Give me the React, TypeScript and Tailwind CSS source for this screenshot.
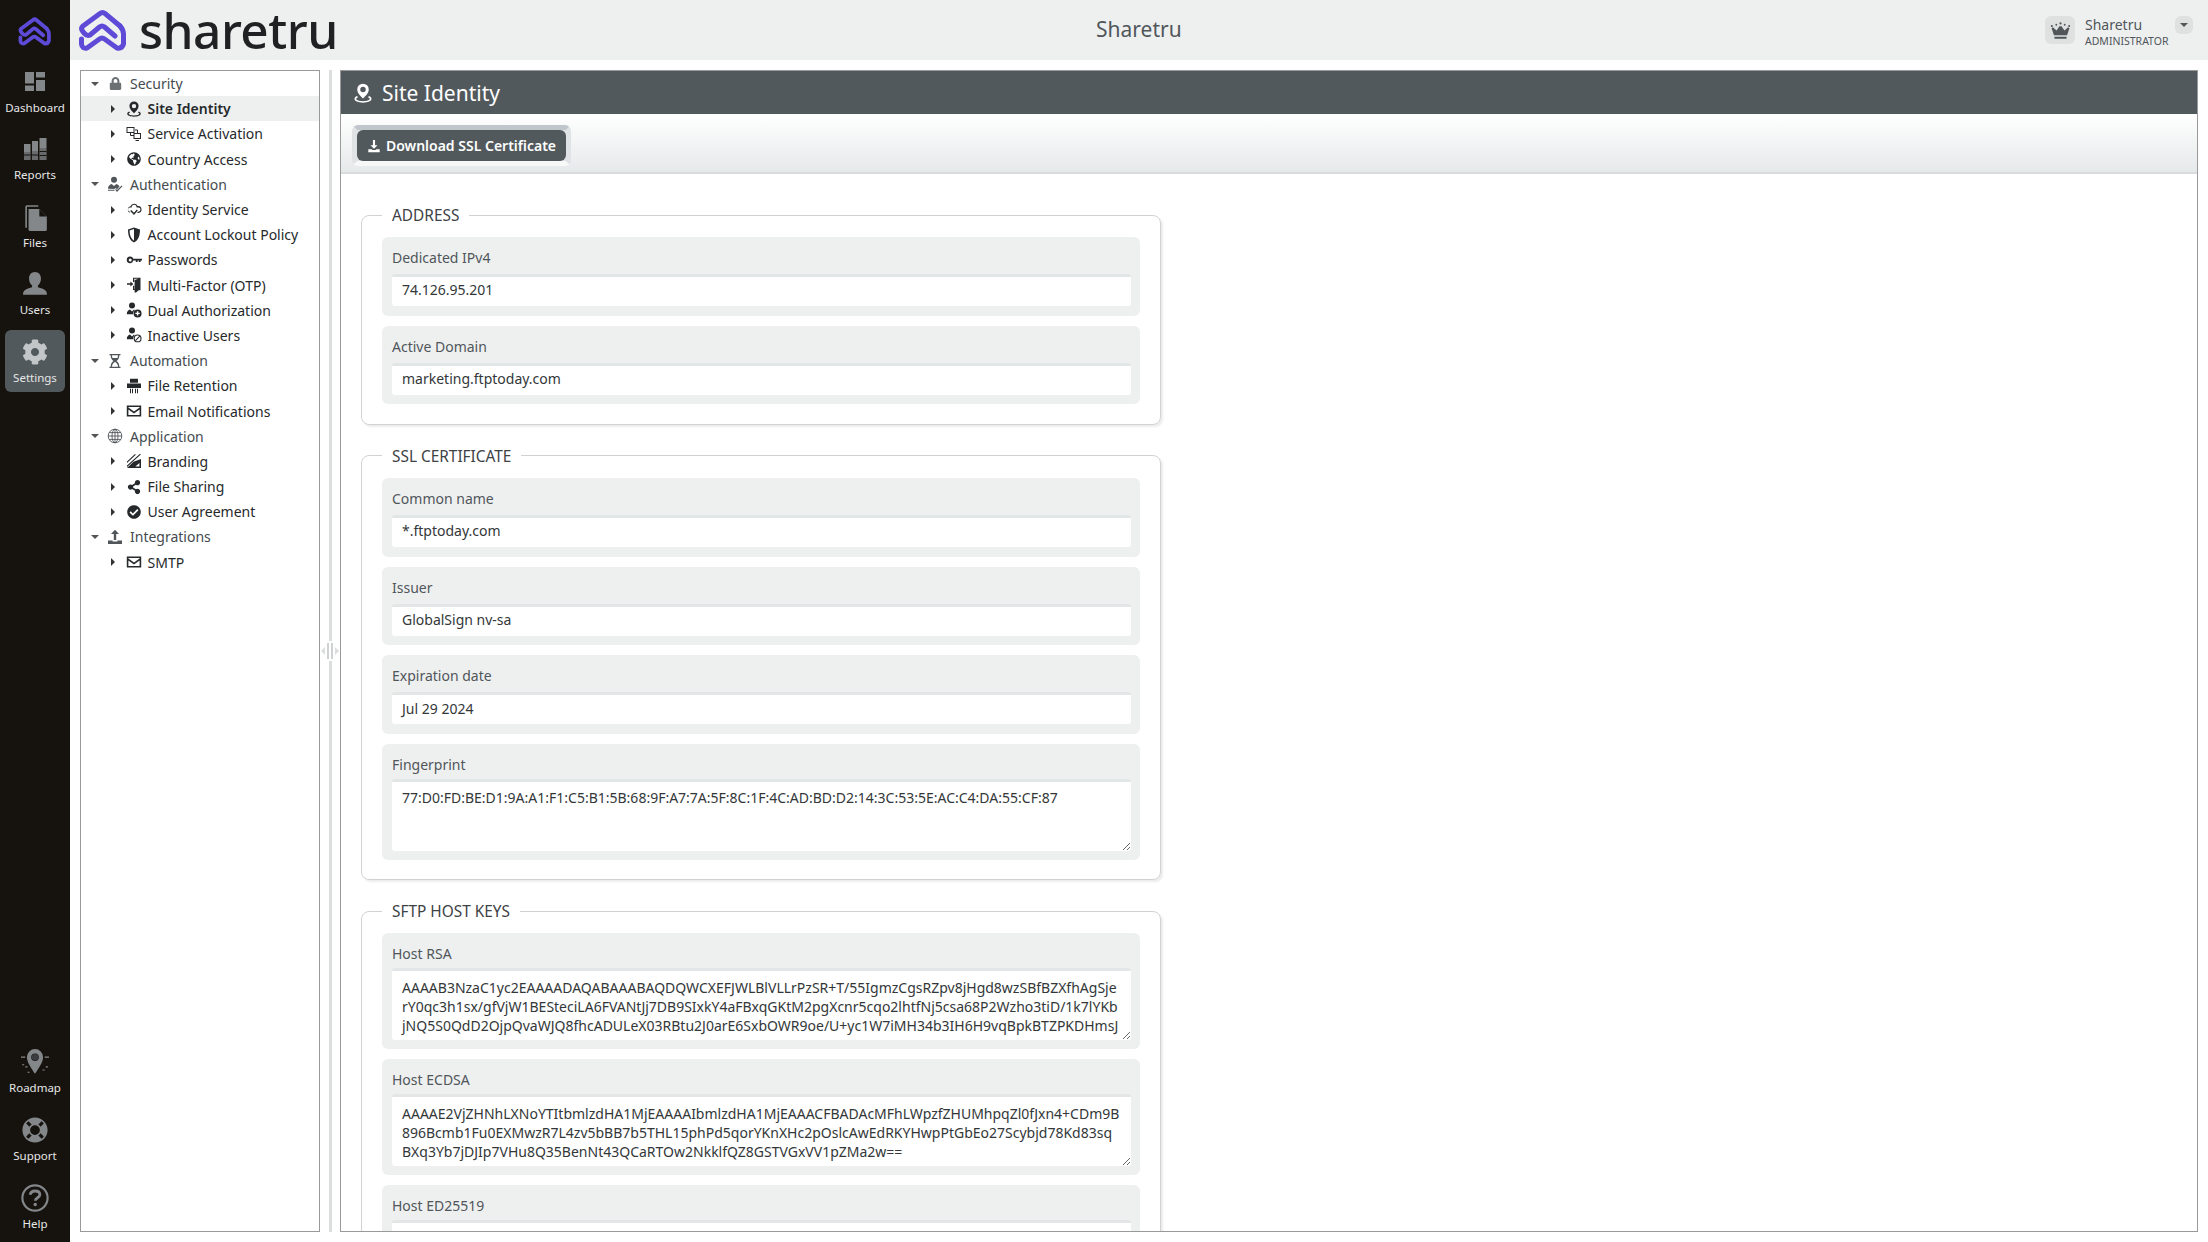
import { ReactNode } from "react";
import { FaCheckCircle, FaCog, FaGlobeAmericas, FaLifeRing, FaLock, FaShareAlt } from "react-icons/fa";

const fontClass = "font-['Noto_Sans','Open_Sans',sans-serif]";

function Svg({ size = 16, children, className = "" }: { size?: number; children: ReactNode; className?: string }) {
  return (
    <svg width={size} height={size} viewBox="0 0 16 16" fill="currentColor" className={className}>
      {children}
    </svg>
  );
}

function Logo({ width, height, stroke }: { width: number; height: number; stroke: number }) {
  return (
    <svg width={width} height={height} viewBox="8 5 50 45" fill="none" stroke="#5d4bd8" strokeWidth={stroke} strokeLinecap="round" strokeLinejoin="round">
      <path d="M45 33 L34.500 24 Q32 22 29.500 24 L20 32 Q17 33.500 14 30 L12.500 28 Q10.500 25 13 23 L30 10.500 Q32.500 8.500 35 10.500 L50 23" />
      <path d="M11.500 36 L11.500 41 Q12 46 17 45 L29.500 36 Q32 34 34.500 36 L47 45 Q52 46 53.500 41 L53.500 31 Q53.500 27 50 23" />
    </svg>
  );
}

const PinIcon = ({ size = 16 }: { size?: number }) => (
  <Svg size={size}>
    <path fillRule="evenodd" d="M8 .5a4.600 4.600 0 0 0-4.600 4.600c0 2.600 2.600 5.400 4.600 7.200 2-1.800 4.600-4.600 4.600-7.200A4.600 4.600 0 0 0 8 .5Zm0 2.400a2.200 2.200 0 1 1 0 4.400 2.200 2.200 0 0 1 0-4.400Z" />
    <path d="M3.200 10.400C1.900 11 1.200 11.800 1.200 12.800c0 1.700 3 2.900 6.800 2.900s6.800-1.200 6.800-2.900c0-1-.7-1.800-2-2.400l-.8 1c.9.4 1.400.9 1.400 1.400 0 .8-2.200 1.700-5.400 1.700s-5.400-.9-5.400-1.700c0-.5.5-1 1.400-1.400Z" />
  </Svg>
);
const ServiceIcon = () => (
  <Svg>
    <g fill="none" stroke="currentColor" strokeWidth="1">
      <rect x="1" y="1.500" width="7" height="5" />
      <rect x="8" y="7.500" width="6.500" height="5" />
      <path d="M4.500 6.500v3H8M9 4h2.500v3.500M9.500 14.500h3.500" />
    </g>
  </Svg>
);
const CloudIcon = () => (
  <Svg>
    <path d="M4.500 4.200A3.800 3.800 0 0 1 11.600 4 3.400 3.400 0 0 1 12.400 11H11l1-1.300h.4a2.100 2.100 0 0 0 0-4.200h-1.700l-.1-.6a2.500 2.500 0 0 0-4.900-.1l-.1.7H4a2.100 2.100 0 0 0-.5 4.100l.8 1.200A3.400 3.400 0 0 1 4.500 4.200Z" />
    <path d="M5.200 7.900 8 10.700 10.800 7.600l1 .9L8 13 4.200 8.900Z" />
  </Svg>
);
const ShieldIcon = () => (
  <Svg>
    <path fillRule="evenodd" d="M8 .5 14 2.500c0 6-1.600 10.800-6 13-4.400-2.200-6-7-6-13L8 .5Zm0 1.600L3.500 3.500C3.600 8.100 5.100 11.900 8 13.700V2.100Z" />
  </Svg>
);
const KeyIcon = () => (
  <Svg>
    <path fillRule="evenodd" d="M4.200 4.600a3.300 3.300 0 0 1 3.100 2.200H16v1.800h-1.400V10h-1.800V8.600h-1.200V10H9.800V8.600H7.300a3.300 3.300 0 1 1-3.100-4Zm0 1.800a1.500 1.500 0 1 0 0 3 1.500 1.500 0 0 0 0-3Z" />
  </Svg>
);
const DoorIcon = () => (
  <Svg>
    <path fillRule="evenodd" d="M7 .8h7.500v12.400H13V13l-3 2.400H8.600V13H7V8.800h1.200v3.200h.4V3l3.800-1.200H8.200V5H7V.8Z" />
    <path d="M1 6.200h3.400V4.400L7.400 7 4.400 9.600V7.800H1Z" />
  </Svg>
);
const UserPlusIcon = ({ ban = false }: { ban?: boolean }) => (
  <Svg>
    <circle cx="6" cy="3.600" r="3" />
    <path d="M.8 12.200c0-2.600 1.600-4.200 3.200-4.600l2 1.800 2-1.800c.3.100.5.2.8.3A4.700 4.700 0 0 0 7.200 12.200H.8Z" />
    {ban ? (
      <>
        <circle cx="11.600" cy="11.400" r="3.400" fill="none" stroke="currentColor" strokeWidth="1.100" />
        <path d="M9.400 13.600l4.400-4.400" stroke="currentColor" strokeWidth="1.100" />
      </>
    ) : (
      <path fillRule="evenodd" d="M11.600 7.400a4 4 0 1 1 0 8 4 4 0 0 1 0-8Zm-.7 1.800v1.500H9.400v1.400h1.500v1.500h1.400v-1.500h1.500v-1.400h-1.500V9.200h-1.400Z" />
    )}
  </Svg>
);
const AuthIcon = () => (
  <Svg>
    <circle cx="7" cy="3.800" r="3" />
    <path d="M1 12.800c0-3 2-4.400 3.600-4.800L7 10l2.400-2c1.400.4 2.600 1.300 3.100 2.600L10 13.200l-1.400-1.300-1 1ZM1 13.800h6.500v1H1Z" />
    <path d="M9 13l1 1 4.600-4.400.8.700L10 16l-1.800-2.200Z" />
  </Svg>
);
const HourglassIcon = () => (
  <Svg>
    <path fillRule="evenodd" d="M2.500 1h11v1.200h-1.200c0 2.800-1 4.800-2.800 5.800 1.800 1 2.800 3 2.800 5.800h1.200V15h-11v-1.200h1.200c0-2.800 1-4.800 2.800-5.800C4.700 7 3.700 5 3.700 2.200H2.500V1Zm2.500 1.200c0 1.100.2 2 .5 2.800h5c.3-.8.5-1.700.5-2.800H5Zm3 6.700c-1.900.8-3 2.600-3 4.900h6c0-2.300-1.100-4.100-3-4.900Z" />
  </Svg>
);
const ShredderIcon = () => (
  <Svg>
    <path d="M4 .8h8v4H4ZM1 5.600h14V10H1ZM4 10.800h1v4.400H4ZM6 10.800h1v4.400H6ZM9 10.800h1v4.400H9ZM11 10.800h1v4.400h-1Z" />
  </Svg>
);
const MailIcon = () => (
  <Svg>
    <path fillRule="evenodd" d="M.8 2.500h14.400v11H.8v-11Zm1.600 1.500v.5L8 8.600l5.600-4.100V4H2.400Zm11.200 2.400L8 10.500 2.400 6.400V12h11.200V6.400Z" />
  </Svg>
);
const GlobeIcon = () => (
  <Svg>
    <g fill="none" stroke="currentColor" strokeWidth="0.9">
      <circle cx="8" cy="8" r="6.800" />
      <ellipse cx="8" cy="8" rx="3" ry="6.800" />
      <path d="M8 1.200v13.600M1.200 8h13.600M2.200 4.600h11.600M2.200 11.400h11.600" />
    </g>
  </Svg>
);
const BrandingIcon = () => (
  <Svg>
    <path fillRule="evenodd" d="M15 6v9H1l6.500-6.200ZM13.400 10l-4 3.600h4V10Z" />
    <path d="M1 8.500 9 1l.8.8L1 10ZM1 12.500 14 .8l.8.800L1 14Z" />
  </Svg>
);
const UploadTrayIcon = () => (
  <Svg>
    <path d="M8 .8 12 5H9.200v6H6.800V5H4ZM1 11.600h4.600v1h4.800v-1H15V15H1Z" />
  </Svg>
);
const CrownIcon = () => (
  <Svg size={21}>
    <path d="M2.200 5.600 5 8l2.200-3.200h1.600L11 8l2.800-2.400 1 .6-1.800 5.400H3L1.200 6.200ZM3.400 12.800h9.200v1.400H3.400Z" />
    <circle cx="1.400" cy="4.600" r=".8" />
    <circle cx="14.600" cy="4.600" r=".8" />
    <circle cx="8" cy="2.600" r=".8" />
    <circle cx="4.800" cy="3.600" r=".7" />
    <circle cx="11.200" cy="3.600" r=".7" />
  </Svg>
);
const DownloadIcon = () => (
  <Svg size={14}>
    <path d="M6.800 1h2.400v6H12L8 11 4 7h2.800ZM1.500 11.600h3.800l1 1h3.400l1-1h3.800V15h-13Z" />
  </Svg>
);

const DashboardIcon = () => (
  <svg width="24" height="24" viewBox="0 0 24 24" fill="currentColor">
    <path d="M2 2h9v11.500H2ZM13 2h9v5.500h-9ZM13 10h9v11h-9ZM2 15.500h9V21H2Z" />
  </svg>
);
const ReportsIcon = () => (
  <svg width="24" height="26" viewBox="0 0 24 26" fill="currentColor">
    <path d="M1 8h6.500v16H1ZM9 5h6v19H9ZM16.500 2H23.500v22h-7Z" />
    <path d="M1 16h6.500v8H1ZM9 15h6v9H9ZM16.500 12H23.500v12h-7Z" fill="#16130f" fillOpacity=".25" />
    <path d="M1 18.500h6.500v1H1ZM9 18.500h6v1H9ZM16.500 15h7v1h-7ZM16.500 19h7v1h-7Z" fill="#16130f" />
  </svg>
);
const FilesIcon = () => (
  <svg width="26" height="28" viewBox="0 0 24 26" fill="currentColor">
    <path d="M3 3.500Q3 2 4.500 2H15v1.500H5Q4.500 3.500 4.500 4V23H3Z" />
    <path d="M6 5.500h10l7 7V24.500Q23 26 21.500 26H7.500Q6 26 6 24.500Z" />
    <path d="M16 5.500l7 7h-7Z" fill="#16130f" />
  </svg>
);
const UsersIcon = () => (
  <svg width="26" height="26" viewBox="0 0 24 24" fill="currentColor">
    <path d="M12 1c3.300 0 5.500 2.600 5.500 6 0 3-1.300 5.300-2.800 6.400v1.600c4 .9 8.300 2.400 8.300 6v1H1v-1c0-3.600 4.300-5.100 8.300-6v-1.600C7.800 12.300 6.500 10 6.500 7c0-3.400 2.200-6 5.500-6Z" />
  </svg>
);
const RoadmapIcon = () => (
  <svg width="28" height="28" viewBox="0 0 26 26" fill="currentColor">
    <path fillRule="evenodd" d="M13 1a7.500 7.500 0 0 0-7.500 7.500c0 4.800 4.500 10.500 7.500 15.500 3-5 7.500-10.700 7.500-15.500A7.500 7.500 0 0 0 13 1Zm0 4a3.500 3.500 0 1 1 0 7 3.500 3.500 0 0 1 0-7Z" />
    <circle cx="13" cy="8.500" r="3" fill="#3a3d40" />
    <path d="M0 8h4v1H0ZM22 8h4v1h-4ZM1 15h2v1H1ZM4 17h2v1H4ZM20 20h2v1h-2ZM23 17h2v1h-2ZM6 22h2v1H6Z" />
  </svg>
);
const HelpIcon = () => (
  <svg width="28" height="28" viewBox="0 0 26 26" fill="none" stroke="currentColor">
    <circle cx="13" cy="13" r="11.700" strokeWidth="2" />
    <path d="M8.500 10c.4-2.400 2.300-3.500 4.600-3.500 2.600 0 4.400 1.400 4.400 3.500 0 2.900-4.200 2.700-4.200 5.500" strokeWidth="2.600" />
    <circle cx="13.200" cy="19" r="1.600" fill="currentColor" stroke="none" />
  </svg>
);

function NavItem({ icon, label, active = false }: { icon: ReactNode; label: string; active?: boolean }) {
  return (
    <div className={`mx-[5px] flex h-[62px] flex-col items-center justify-center rounded-md ${active ? "bg-[#52595d]" : ""}`}>
      <div className={`flex h-[30px] items-center justify-center ${active ? "text-[#c3c6c8]" : "text-[#83878a]"}`}>{icon}</div>
      <span className="mt-[3px] whitespace-nowrap text-[11.500px] leading-[16px] text-[#e6e7e7]">{label}</span>
    </div>
  );
}

function Caret({ open }: { open: boolean }) {
  return open ? (
    <span className="h-0 w-0 border-x-[4px] border-t-[4px] border-x-transparent border-t-[#555]" />
  ) : (
    <span className="h-0 w-0 border-y-[4px] border-l-[4px] border-y-transparent border-l-[#333]" />
  );
}

function TreeGroup({ icon, label }: { icon: ReactNode; label: string }) {
  return (
    <div className="flex h-[25.200px] items-center text-[#444b4f]">
      <span className="ml-[10px] flex w-[8px] justify-center"><Caret open /></span>
      <span className="ml-[8px] flex w-[16px] justify-center text-[#50565a]">{icon}</span>
      <span className="ml-[7px] text-[14px]">{label}</span>
    </div>
  );
}

function TreeItem({ icon, label, active = false }: { icon: ReactNode; label: string; active?: boolean }) {
  return (
    <div className={`flex h-[25.200px] items-center text-[#26292b] ${active ? "bg-[#eef0f0] font-semibold" : ""}`}>
      <span className="ml-[27.500px] flex w-[8px] justify-center"><Caret open={false} /></span>
      <span className="ml-[9px] flex w-[16px] justify-center">{icon}</span>
      <span className="ml-[6px] whitespace-nowrap text-[14px]">{label}</span>
    </div>
  );
}

function Field({ label, value }: { label: string; value: string }) {
  return (
    <div className="rounded-md bg-[#eef0f0] pb-[9.700px] pl-[10px] pr-[9px] pt-[10px]">
      <div className="h-[22px] text-[14px] leading-[22px] text-[#50565a]">{label}</div>
      <div className="mt-[5px] flex h-[32px] items-center rounded-[3px] border-t-[3px] border-[#e3e6e6] bg-white pb-[3.500px] pl-[10px] text-[14px] text-[#333739]">{value}</div>
    </div>
  );
}

function AreaField({ label, value, rows = 3 }: { label: string; value: string; rows?: number }) {
  return (
    <div className="rounded-md bg-[#eef0f0] pb-[9px] pl-[10px] pr-[9px] pt-[10px]">
      <div className="h-[22px] text-[14px] leading-[22px] text-[#50565a]">{label}</div>
      <textarea
        readOnly
        rows={rows}
        value={value}
        className="mt-[3px] block h-[72px] w-full resize-y overflow-hidden whitespace-pre rounded-[3px] border-t-[3px] border-[#e3e6e6] bg-white pl-[10px] pt-[6.500px] text-[14px] leading-[19.200px] text-[#333739] outline-none"
      />
    </div>
  );
}

function Group({ title, children }: { title: string; children: ReactNode }) {
  return (
    <fieldset className="mb-[20px] w-[800px] rounded-lg border border-[#cfd3d4] px-[20px] pb-[19.500px] shadow-[2px_2px_2px_rgba(0,0,0,0.08)]">
      <legend className="ml-0 h-[22px] px-[10px] text-[15.400px] leading-[24px] text-[#3d4245]">{title}</legend>
      <div className="mt-[11px] flex flex-col gap-[10px]">{children}</div>
    </fieldset>
  );
}

const hostRsa = "AAAAB3NzaC1yc2EAAAADAQABAAABAQDQWCXEFJWLBlVLLrPzSR+T/55IgmzCgsRZpv8jHgd8wzSBfBZXfhAgSje\nrY0qc3h1sx/gfVjW1BESteciLA6FVANtJj7DB9SIxkY4aFBxqGKtM2pgXcnr5cqo2lhtfNj5csa68P2Wzho3tiD/1k7lYKb\njNQ5S0QdD2OjpQvaWJQ8fhcADULeX03RBtu2J0arE6SxbOWR9oe/U+yc1W7iMH34b3IH6H9vqBpkBTZPKDHmsJ";
const hostEcdsa = "AAAAE2VjZHNhLXNoYTItbmlzdHA1MjEAAAAIbmlzdHA1MjEAAACFBADAcMFhLWpzfZHUMhpqZl0fJxn4+CDm9B\n896Bcmb1Fu0EXMwzR7L4zv5bBB7b5THL15phPd5qorYKnXHc2pOslcAwEdRKYHwpPtGbEo27Scybjd78Kd83sq\nBXq3Yb7jDJIp7VHu8Q35BenNt43QCaRTOw2NkklfQZ8GSTVGxVV1pZMa2w==";

export default function App() {
  return (
    <div className={`flex h-screen w-full overflow-hidden bg-white ${fontClass}`}>
      <aside className="flex w-[70px] shrink-0 flex-col bg-[#16130f]">
        <div className="flex h-[60px] items-center justify-center pt-[2px]"><Logo width={34} height={31} stroke={5.500} /></div>
        <div className="flex flex-col gap-[5.500px]">
          <NavItem icon={<DashboardIcon />} label="Dashboard" />
          <NavItem icon={<ReportsIcon />} label="Reports" />
          <NavItem icon={<FilesIcon />} label="Files" />
          <NavItem icon={<UsersIcon />} label="Users" />
          <NavItem icon={<FaCog size={26} />} label="Settings" active />
        </div>
        <div className="mt-auto flex flex-col gap-[6px] pb-[4px]">
          <NavItem icon={<RoadmapIcon />} label="Roadmap" />
          <NavItem icon={<FaLifeRing size={26} />} label="Support" />
          <NavItem icon={<HelpIcon />} label="Help" />
        </div>
      </aside>

      <div className="flex min-w-0 flex-1 flex-col">
        <header className="relative flex h-[60px] shrink-0 items-center bg-[#eef0f0] pl-[8px]">
          <Logo width={50} height={45} stroke={5} />
          <span className="ml-[11px] text-[49.500px] font-medium leading-[60px] tracking-[-0.5px] text-[#1f2122]">sharetru</span>
          <span className="absolute left-[1026px] top-[15px] text-[21px] leading-[28px] text-[#50565a]">Sharetru</span>
          <div className="ml-auto flex items-center pr-[15px]">
            <span className="flex h-[28px] w-[30px] items-center justify-center rounded-md bg-[#dfe1e1] text-[#50565a]"><CrownIcon /></span>
            <div className="ml-[10px] mt-[3px] w-[90px]">
              <div className="text-[14px] leading-[18px] text-[#50565a]">Sharetru</div>
              <div className="text-[10.500px] leading-[14px] text-[#50565a]">ADMINISTRATOR</div>
            </div>
            <span className="mb-[10px] flex h-[18px] w-[18px] items-center justify-center rounded-md bg-[#dfe1e1]">
              <span className="h-0 w-0 border-x-[4px] border-t-[4px] border-x-transparent border-t-[#50565a]" />
            </span>
          </div>
        </header>

        <div className="flex min-h-0 flex-1 p-[10px]">
          <nav className="h-full w-[240px] shrink-0 border border-[#999] text-[14px]">
            <TreeGroup icon={<FaLock size={13} className="text-[#6b7073]" />} label="Security" />
            <TreeItem icon={<PinIcon />} label="Site Identity" active />
            <TreeItem icon={<ServiceIcon />} label="Service Activation" />
            <TreeItem icon={<FaGlobeAmericas size={14} />} label="Country Access" />
            <TreeGroup icon={<AuthIcon />} label="Authentication" />
            <TreeItem icon={<CloudIcon />} label="Identity Service" />
            <TreeItem icon={<ShieldIcon />} label="Account Lockout Policy" />
            <TreeItem icon={<KeyIcon />} label="Passwords" />
            <TreeItem icon={<DoorIcon />} label="Multi-Factor (OTP)" />
            <TreeItem icon={<UserPlusIcon />} label="Dual Authorization" />
            <TreeItem icon={<UserPlusIcon ban />} label="Inactive Users" />
            <TreeGroup icon={<HourglassIcon />} label="Automation" />
            <TreeItem icon={<ShredderIcon />} label="File Retention" />
            <TreeItem icon={<MailIcon />} label="Email Notifications" />
            <TreeGroup icon={<GlobeIcon />} label="Application" />
            <TreeItem icon={<BrandingIcon />} label="Branding" />
            <TreeItem icon={<FaShareAlt size={14} />} label="File Sharing" />
            <TreeItem icon={<FaCheckCircle size={14} />} label="User Agreement" />
            <TreeGroup icon={<UploadTrayIcon />} label="Integrations" />
            <TreeItem icon={<MailIcon />} label="SMTP" />
          </nav>

          <div className="flex w-[20px] shrink-0 flex-col items-center">
            <div className="w-[3px] flex-1 bg-[#dcdede]" />
            <div className="flex h-[20px] items-center gap-[2px] text-[#cfd2d3]">
              <span className="h-0 w-0 border-y-[4px] border-r-[4px] border-y-transparent border-r-[#dcdede]" />
              <span className="h-[16px] w-[2px] bg-[#cfd2d3]" />
              <span className="h-[16px] w-[2px] bg-[#cfd2d3]" />
              <span className="h-0 w-0 border-y-[4px] border-l-[4px] border-y-transparent border-l-[#dcdede]" />
            </div>
            <div className="h-[571px] w-[3px] bg-[#dcdede]" />
          </div>

          <main className="flex min-w-0 flex-1 flex-col overflow-hidden border border-[#999]">
            <div className="flex h-[43px] shrink-0 items-center bg-[#52595d] pl-[12px] text-white">
              <PinIcon size={20} />
              <span className="ml-[9px] text-[21px] leading-[30px]">Site Identity</span>
            </div>
            <div className="h-[60px] shrink-0 border-b-2 border-[#d8dcdd] bg-gradient-to-b from-white to-[#e6e9ea] pl-[11px] pt-[11px]">
              <div className="inline-block rounded-md border-x-[5px] border-b-[5px] border-t-[5px] border-x-[#dfe3e6] border-b-[#f7f8f8] border-t-[#c0c6cb] bg-[#dfe3e6]">
                <button className="flex h-[31px] w-[209px] items-center justify-center gap-[5px] rounded-md bg-[#52595d] text-[14px] font-semibold text-white">
                  <DownloadIcon />
                  Download SSL Certificate
                </button>
              </div>
            </div>
            <div className="min-h-0 flex-1 overflow-hidden pl-[20px] pt-[30px]">
              <Group title="ADDRESS">
                <Field label="Dedicated IPv4" value="74.126.95.201" />
                <Field label="Active Domain" value="marketing.ftptoday.com" />
              </Group>
              <Group title="SSL CERTIFICATE">
                <Field label="Common name" value="*.ftptoday.com" />
                <Field label="Issuer" value="GlobalSign nv-sa" />
                <Field label="Expiration date" value="Jul 29 2024" />
                <AreaField label="Fingerprint" value="77:D0:FD:BE:D1:9A:A1:F1:C5:B1:5B:68:9F:A7:7A:5F:8C:1F:4C:AD:BD:D2:14:3C:53:5E:AC:C4:DA:55:CF:87" />
              </Group>
              <Group title="SFTP HOST KEYS">
                <AreaField label="Host RSA" value={hostRsa} />
                <AreaField label="Host ECDSA" value={hostEcdsa} />
                <AreaField label="Host ED25519" value="" />
              </Group>
            </div>
          </main>
        </div>
      </div>
    </div>
  );
}
